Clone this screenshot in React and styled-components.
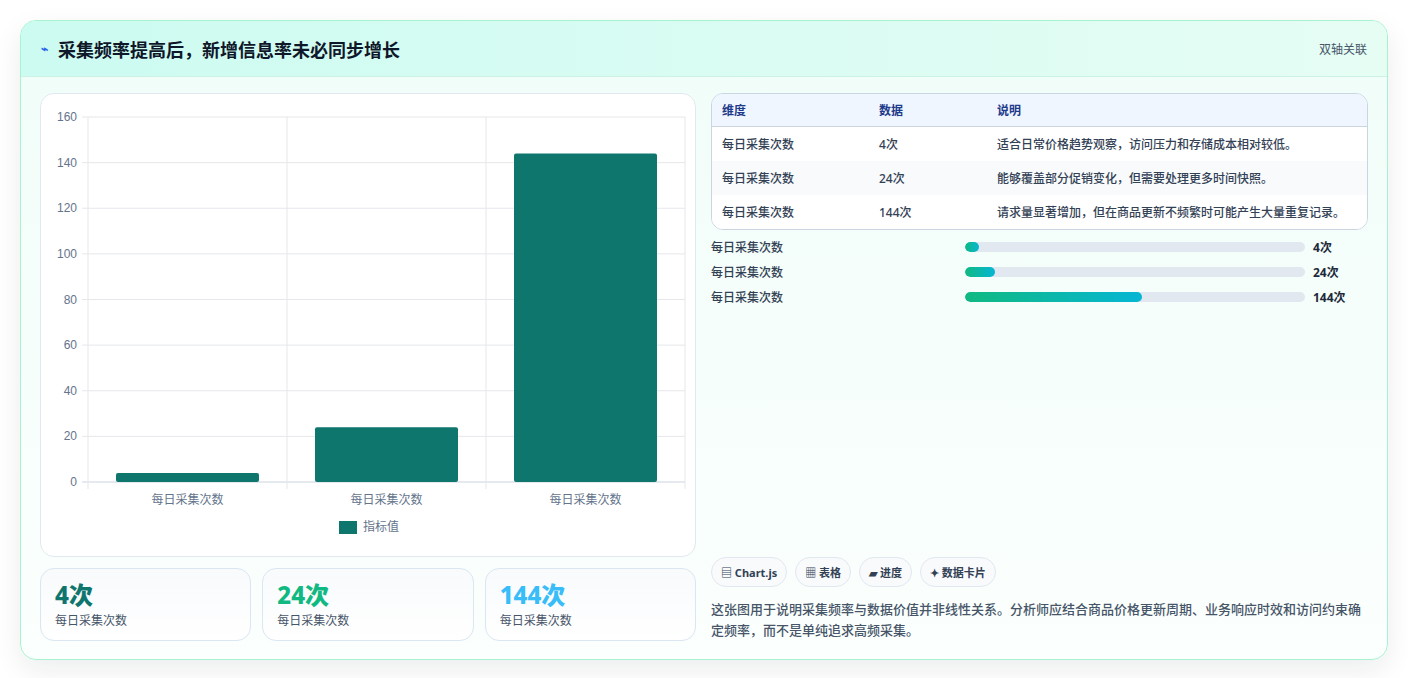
import React from 'react';
import styled, { createGlobalStyle } from 'styled-components';

const GlobalStyle = createGlobalStyle`
  body {
    margin: 0;
    background: #ffffff;
    font-family: "Noto Sans", "Noto Sans CJK SC", sans-serif;
  }
`

const rows = [
    { name: '每日采集次数', value: 4, note: '适合日常价格趋势观察，访问压力和存储成本相对较低。' },
    { name: '每日采集次数', value: 24, note: '能够覆盖部分促销变化，但需要处理更多时间快照。' },
    { name: '每日采集次数', value: 144, note: '请求量显著增加，但在商品更新不频繁时可能产生大量重复记录。' },
]

const statColors = ['#0f766e', '#10b981', '#38bdf8']

const BarChart = () => {
    const left = 87, right = 684, top = 115, bottom = 480
    const h = bottom - top
    const colW = (right - left) / 3
    const ticks = [0, 20, 40, 60, 80, 100, 120, 140, 160]
    return (
        <svg width="656" height="462" viewBox="40 92 656 462" style={{ display: 'block' }}>
            {ticks.map(t => {
                const y = bottom - (t / 160) * h
                return (
                    <g key={t}>
                        <line x1={left - 6} x2={right} y1={y} y2={y} stroke={t === 0 ? '#cbd5e1' : '#e5e7eb'} />
                        <text x={76} y={y + 4} textAnchor="end" fontSize="12" fill="#64748b" fontFamily="Liberation Sans, sans-serif">{t}</text>
                    </g>
                )
            })}
            {[0, 1, 2, 3].map(i => (
                <line key={i} x1={left + i * colW} x2={left + i * colW} y1={top} y2={bottom + 7} stroke="#e5e7eb" />
            ))}
            {rows.map((r, i) => {
                const bh = (r.value / 160) * h
                const x = left + i * colW + 28
                return (
                    <g key={i}>
                        <rect x={x} y={bottom - bh} width={143} height={bh} rx="2" fill="#0f766e" />
                        <text x={left + i * colW + colW / 2} y={502} textAnchor="middle" fontSize="12" fill="#64748b" fontFamily="Noto Sans CJK SC, sans-serif">{r.name}</text>
                    </g>
                )
            })}
            <rect x={338} y={519} width={18} height={13} fill="#0f766e" />
            <text x={362} y={529} fontSize="12" fill="#64748b" fontFamily="Noto Sans CJK SC, sans-serif">指标值</text>
        </svg>
    )
}

const App = () => {
    return (
        <>
            <GlobalStyle />
            <Page>
                <Card>
                    <Header>
                        <Title><Bolt>⌁</Bolt>采集频率提高后，新增信息率未必同步增长</Title>
                        <Tag>双轴关联</Tag>
                    </Header>
                    <Body>
                        <LeftCol>
                            <ChartBox><BarChart /></ChartBox>
                            <Stats>
                                {rows.map((r, i) => (
                                    <Stat key={i}>
                                        <StatValue color={statColors[i]}>{r.value}次</StatValue>
                                        <StatLabel>{r.name}</StatLabel>
                                    </Stat>
                                ))}
                            </Stats>
                        </LeftCol>
                        <RightCol>
                            <div>
                                <Table>
                                    <thead>
                                        <tr><Th>维度</Th><Th>数据</Th><Th>说明</Th></tr>
                                    </thead>
                                    <tbody>
                                        {rows.map((r, i) => (
                                            <Tr key={i} alt={i % 2 === 1}>
                                                <Td>{r.name}</Td><Td>{r.value}次</Td><Td>{r.note}</Td>
                                            </Tr>
                                        ))}
                                    </tbody>
                                </Table>
                                <Bars>
                                    {rows.map((r, i) => (
                                        <BarRow key={i}>
                                            <BarLabel>{r.name}</BarLabel>
                                            <Track>
                                                <Fill style={{ width: `${Math.max(4, (r.value / 276) * 100)}%` }} />
                                            </Track>
                                            <BarValue>{r.value}次</BarValue>
                                        </BarRow>
                                    ))}
                                </Bars>
                            </div>
                            <div>
                                <Chips>
                                    <Chip>▤ Chart.js</Chip>
                                    <Chip>▦ 表格</Chip>
                                    <Chip>▰ 进度</Chip>
                                    <Chip>✦ 数据卡片</Chip>
                                </Chips>
                                <Desc>这张图用于说明采集频率与数据价值并非线性关系。分析师应结合商品价格更新周期、业务响应时效和访问约束确定频率，而不是单纯追求高频采集。</Desc>
                            </div>
                        </RightCol>
                    </Body>
                </Card>
            </Page>
        </>
    )
}

const Page = styled.div`
    padding: 20px 20px 20px 20px;
    width: 1368px;
`
const Card = styled.div`
    border: 1px solid #a7f3d0;
    border-radius: 16px;
    overflow: hidden;
    background: linear-gradient(180deg, #f0fdf8 0%, #fbfffd 100%);
    box-shadow: 0 10px 28px rgba(15, 23, 42, 0.08);
`
const Header = styled.div`
    height: 55px;
    display: flex;
    align-items: center;
    justify-content: space-between;
    padding: 0 20px;
    background: linear-gradient(90deg, #ccfbf1 0%, #e6fdf4 100%);
    border-bottom: 1px solid #ccf2e4;
`
const Title = styled.div`
    font-size: 18px;
    font-weight: 700;
    color: #0f172a;
    display: flex;
    align-items: center;
    gap: 10px;
`
const Bolt = styled.span`
    color: #2563eb;
    font-size: 12px;
`
const Tag = styled.div`
    font-size: 12px;
    color: #475569;
`
const Body = styled.div`
    display: grid;
    grid-template-columns: 656px 657px;
    gap: 15px;
    padding: 16px 19px 18px 19px;
`
const LeftCol = styled.div`
    display: flex;
    flex-direction: column;
    gap: 11px;
`
const ChartBox = styled.div`
    height: 462px;
    background: #fff;
    border: 1px solid #e2e8f0;
    border-radius: 14px;
    overflow: hidden;
`
const Stats = styled.div`
    display: grid;
    grid-template-columns: repeat(3, 1fr);
    gap: 11px;
`
const Stat = styled.div`
    height: 73px;
    box-sizing: border-box;
    border: 1px solid #dbe6f3;
    border-radius: 14px;
    background: linear-gradient(180deg, #f8fafc, #ffffff);
    padding: 10px 14px;
`
const StatValue = styled.div`
    font-size: 24px;
    font-weight: 800;
    color: ${p => p.color};
    line-height: 32px;
`
const StatLabel = styled.div`
    font-size: 12px;
    color: #475569;
`
const RightCol = styled.div`
    display: flex;
    flex-direction: column;
    justify-content: space-between;
`
const Table = styled.table`
    width: 100%;
    border-collapse: separate;
    border-spacing: 0;
    border: 1px solid #cbd5e1;
    border-radius: 12px;
    overflow: hidden;
    font-size: 12px;
`
const Th = styled.th`
    text-align: left;
    background: #eff6ff;
    color: #1e3a8a;
    font-weight: 700;
    height: 32px;
    padding: 0 10px;
    border-bottom: 1px solid #cbd5e1;
    &:nth-child(1) { width: 137px; }
    &:nth-child(2) { width: 98px; }
`
const Tr = styled.tr`
    background: ${p => (p.alt ? '#f8fafc' : '#ffffff')};
    & + & td { border-top: 1px solid #e2e8f0; }
`
const Td = styled.td`
    height: 34px;
    padding: 0 10px;
    color: #334155;
    font-weight: 500;
`
const Bars = styled.div`
    margin-top: 8px;
    display: flex;
    flex-direction: column;
    gap: 7px;
`
const BarRow = styled.div`
    display: grid;
    grid-template-columns: 246px 340px 1fr;
    align-items: center;
    column-gap: 8px;
    height: 18px;
`
const BarLabel = styled.div`
    font-size: 12px;
    font-weight: 500;
    color: #334155;
`
const Track = styled.div`
    height: 10px;
    border-radius: 5px;
    background: #e2e8f0;
    overflow: hidden;
`
const Fill = styled.div`
    height: 100%;
    border-radius: 5px;
    background: linear-gradient(90deg, #10b981, #06b6d4);
`
const BarValue = styled.div`
    font-size: 12px;
    font-weight: 700;
    color: #1e293b;
`
const Chips = styled.div`
    display: flex;
    gap: 8px;
    margin-bottom: 12px;
`
const Chip = styled.div`
    font-size: 11px;
    font-weight: 700;
    color: #334155;
    background: #f8fafc;
    border: 1px solid #e2e8f0;
    border-radius: 15px;
    padding: 6px 9px;
`
const Desc = styled.div`
    font-size: 13px;
    line-height: 21px;
    color: #475569;
    font-weight: 500;
`

export default App
